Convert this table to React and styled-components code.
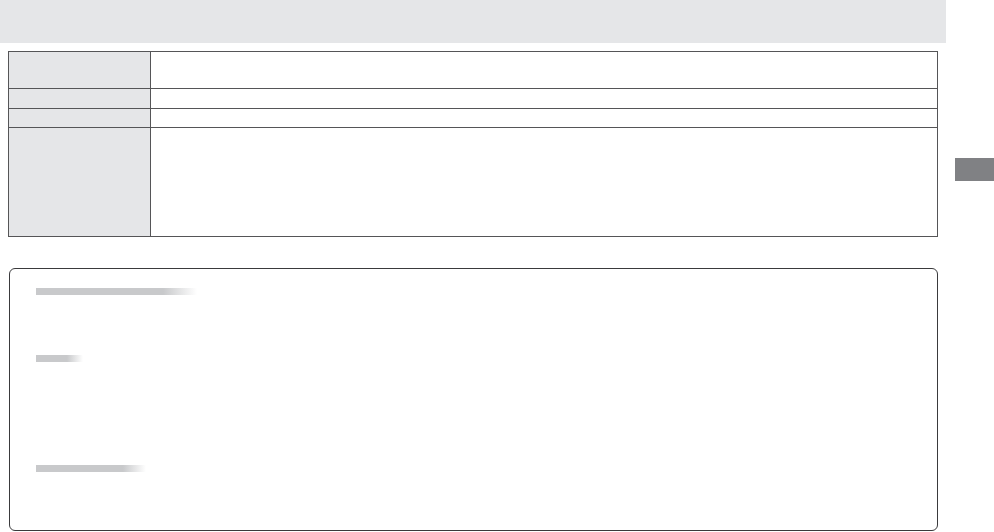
import React from "react";
import styled, { createGlobalStyle } from "styled-components";

const GlobalStyle = createGlobalStyle`
  html, body {
    margin: 0;
    padding: 0;
    background: #ffffff;
    font-family: "Liberation Sans", Arial, sans-serif;
  }
  *, *::before, *::after {
    box-sizing: border-box;
  }
`;

const rows = [
  { height: 36 },
  { height: 20 },
  { height: 19 },
  { height: 109 },
];

const headings = [
  { top: 19, width: 161, fade: 79, after: 60 },
  { top: 0, width: 47, fade: 66, after: 103 },
  { top: 0, width: 110, fade: 79, after: 0 },
];

export default function App() {
  return (
    <>
      <GlobalStyle />
      <Page>
        <Main>
          <Banner />
          <SpecTable>
            {rows.map((row, i) => (
              <SpecRow key={i} $height={row.height} $first={i === 0}>
                <LabelCell />
                <ValueCell />
              </SpecRow>
            ))}
          </SpecTable>
          <NoteBox>
            {headings.map((h, i) => (
              <NoteSection key={i} $top={h.top} $after={h.after}>
                <HeadingBar $width={h.width} $fade={h.fade} />
              </NoteSection>
            ))}
          </NoteBox>
        </Main>
        <Side>
          <ChapterTab />
        </Side>
      </Page>
    </>
  );
}

const Page = styled.div`
  display: flex;
  width: 994px;
  height: 532px;
  overflow: hidden;
`;

const Main = styled.div`
  width: 946px;
  display: flex;
  flex-direction: column;
`;

const Banner = styled.div`
  height: 43px;
  background: #e5e6e8;
`;

const SpecTable = styled.div`
  margin: 8px 0 0 8px;
  width: 930px;
  border: 1px solid #555557;
  display: flex;
  flex-direction: column;
`;

const SpecRow = styled.div`
  display: grid;
  grid-template-columns: 142px 1fr;
  height: ${(p) => p.$height}px;
  border-top: ${(p) => (p.$first ? "none" : "1px solid #555557")};
`;

const LabelCell = styled.div`
  background: #e5e6e8;
  border-right: 1px solid #555557;
`;

const ValueCell = styled.div`
  background: #ffffff;
`;

const NoteBox = styled.div`
  margin: 31px 0 0 9px;
  width: 929px;
  height: 263px;
  border: 1.5px solid #3a3a3c;
  border-radius: 6px;
  padding: 0 0 0 26px;
  display: flex;
  flex-direction: column;
`;

const NoteSection = styled.div`
  margin-top: ${(p) => p.$top}px;
  padding-bottom: ${(p) => p.$after}px;
`;

const HeadingBar = styled.div`
  width: ${(p) => p.$width}px;
  height: 7px;
  background: linear-gradient(
    to right,
    #c8c9cb 0%,
    #c8c9cb ${(p) => p.$fade}%,
    #ffffff 100%
  );
`;

const Side = styled.div`
  flex: 1;
  display: flex;
  flex-direction: column;
  padding: 158px 0 0 9px;
`;

const ChapterTab = styled.div`
  height: 23px;
  background: #808184;
`;
